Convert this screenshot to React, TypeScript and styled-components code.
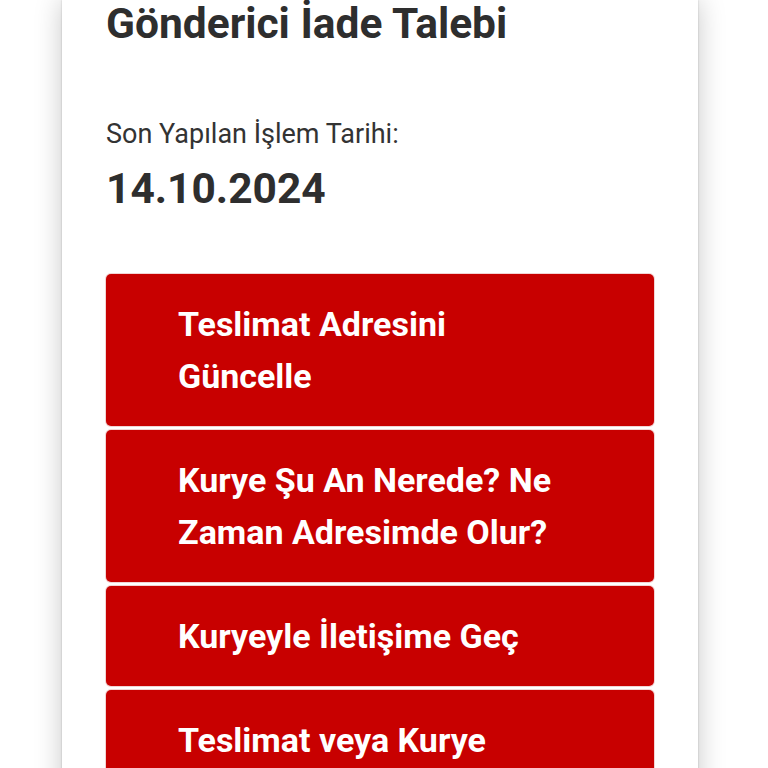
import React from 'react';
import styled, { createGlobalStyle } from 'styled-components';

const GlobalStyle = createGlobalStyle`
  html, body {
    margin: 0;
    padding: 0;
    background: #ffffff;
    font-family: Roboto, "Liberation Sans", Arial, sans-serif;
  }
`;

const Page = styled.div`
  height: 768px;
  overflow: hidden;
  padding: 0 70px 0 62px;
`;

const Card = styled.div`
  background: #ffffff;
  min-height: 800px;
  padding: 0 44px;
  box-shadow: 0 0 2px rgba(0, 0, 0, 0.2), 0 0 26px rgba(0, 0, 0, 0.22);
`;

const Title = styled.h1`
  margin: 0;
  font-size: 42.5px;
  line-height: 48px;
  font-weight: 700;
  color: #2e2e2e;
`;

const Label = styled.div`
  margin-top: 70px;
  font-size: 27px;
  line-height: 32px;
  color: #333333;
`;

const DateValue = styled.div`
  margin-top: 13px;
  font-size: 42.5px;
  line-height: 52px;
  font-weight: 700;
  color: #2e2e2e;
`;

const ActionList = styled.div`
  margin-top: 59px;
  display: flex;
  flex-direction: column;
  gap: 4px;
`;

const ActionButton = styled.button`
  display: block;
  width: 100%;
  text-align: left;
  background: #c80000;
  border: none;
  border-radius: 5px;
  box-shadow: 0 0 0 1px rgba(230, 170, 170, 0.5);
  padding: 24px 72px;
  font-family: inherit;
  font-size: 34px;
  line-height: 52px;
  font-weight: 700;
  color: #ffffff;
  cursor: pointer;
`;

const actions = [
  'Teslimat Adresini Güncelle',
  'Kurye Şu An Nerede? Ne Zaman Adresimde Olur?',
  'Kuryeyle İletişime Geç',
  'Teslimat veya Kurye Hakkında Şikayet',
];

export default function App() {
  return (
    <>
      <GlobalStyle />
      <Page>
        <Card>
          <Title>Gönderici İade Talebi</Title>
          <Label>Son Yapılan İşlem Tarihi:</Label>
          <DateValue>14.10.2024</DateValue>
          <ActionList>
            {actions.map((a) => (
              <ActionButton key={a}>{a}</ActionButton>
            ))}
          </ActionList>
        </Card>
      </Page>
    </>
  );
}
